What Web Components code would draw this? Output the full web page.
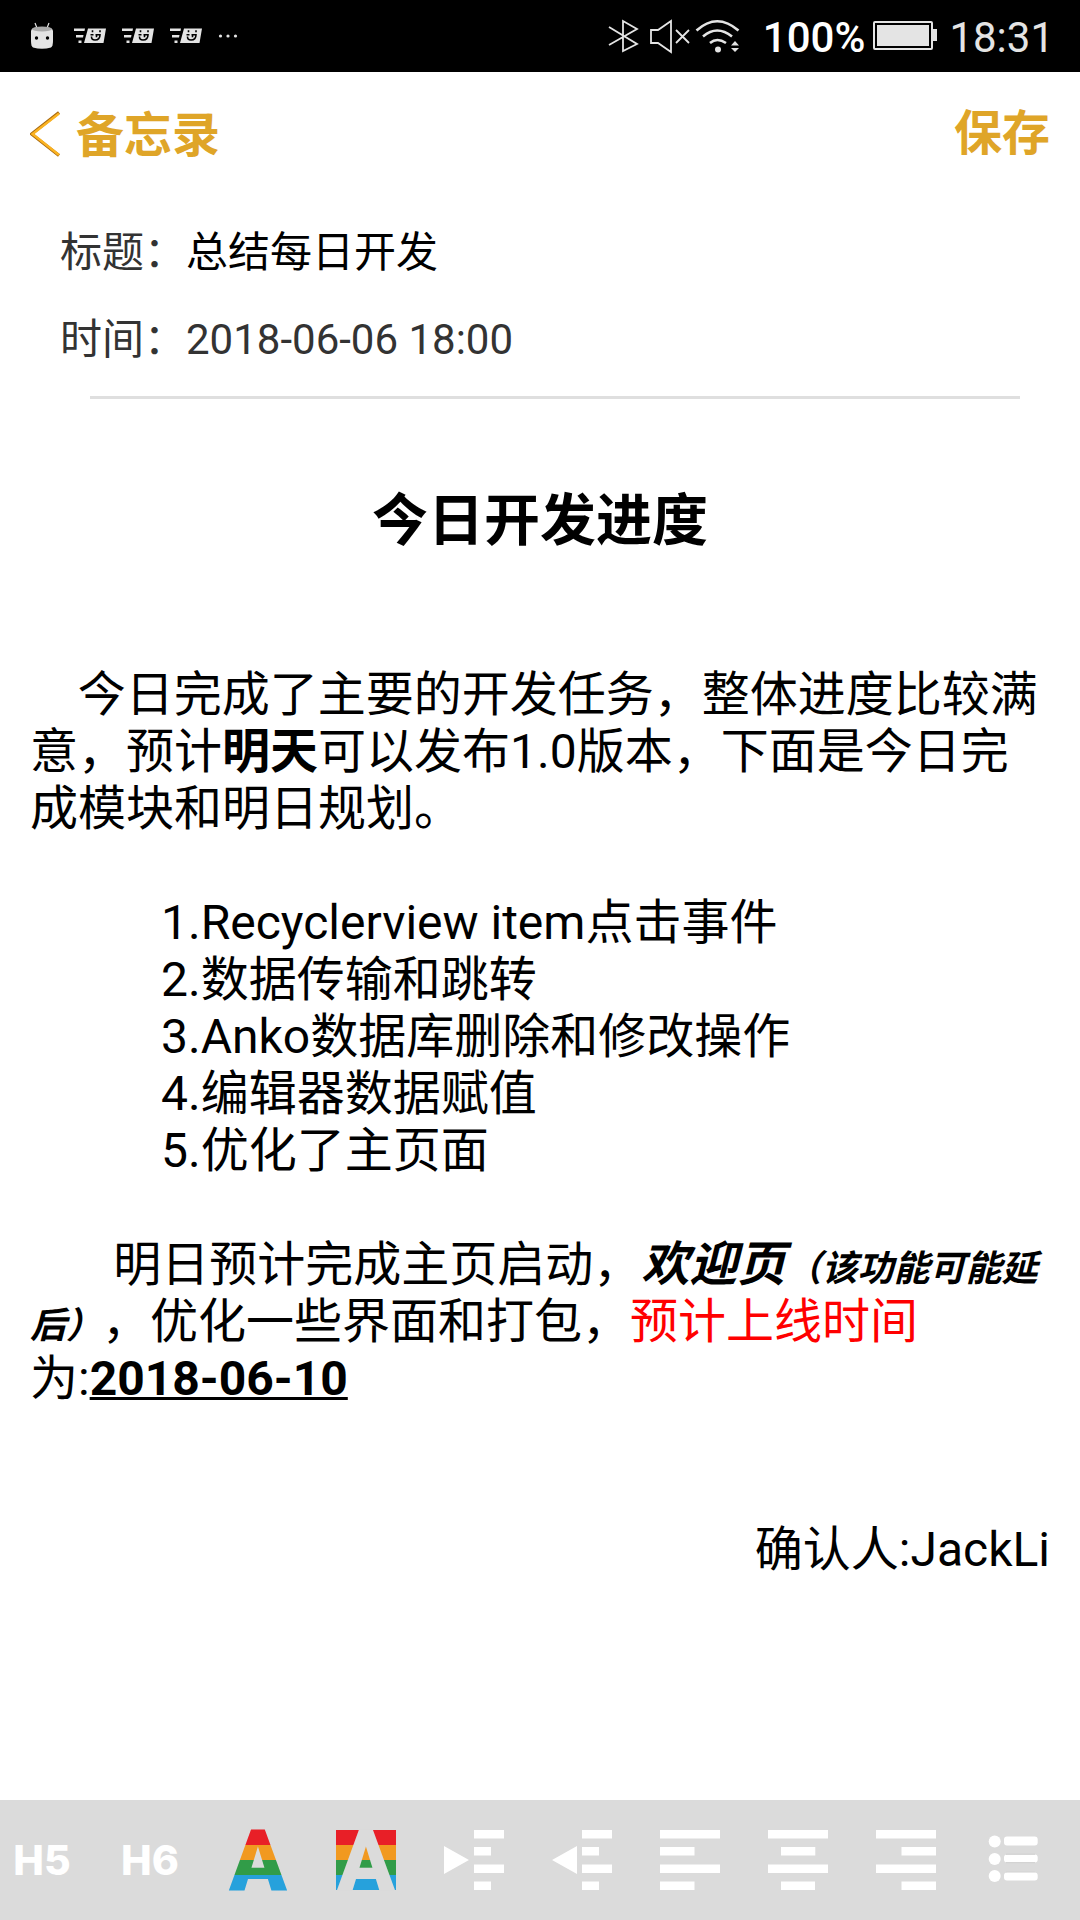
<!DOCTYPE html>
<html lang="zh-CN">
<head>
<meta charset="utf-8">
<meta name="viewport" content="width=device-width, initial-scale=1">
<title>备忘录</title>
<style>
  html, body { margin: 0; height: 100%; }
  body { background: #fff; color: #000; font-family: Roboto, "Noto Sans CJK SC", sans-serif; text-spacing-trim: space-all; }
</style>
</head>
<body>
<memo-app></memo-app>

<template id="status-bar">
  <style>
    :host { display: flex; align-items: center; height: 72px; padding: 0 26px 0 30px; box-sizing: border-box; background: #000; color: #e4e4e4; font-size: 42px; line-height: 68px; }
    svg { display: block; flex: none; }
    .left { display: flex; align-items: center; gap: 16px; flex: 1; }
    .left courier-icon:nth-child(2) { margin-left: 4px; }
    .right { display: flex; align-items: center; }
    .right span { padding-top: 4px; }
    .mute { margin: 0 4px 0 10px; }
    .level { font-weight: 500; color: #fff; margin-left: 22px; margin-right: 8px; }
    .battery { margin-right: 12px; }
  </style>
  <div class="left">
    <svg width="24" height="28" viewBox="0 0 24 28"><path d="M5 1l2 5M19 1l-2 5" stroke="#e4e4e4" stroke-width="1.2"/><path d="M1 9Q1 5 12 5T23 9V19Q23 24 21 25.500Q12 28 3 25.500Q1 24 1 19Z" fill="#e4e4e4"/><ellipse cx="12" cy="7" rx="10" ry="2.600" fill="#aaa"/><circle cx="6.500" cy="16" r="1.700"/><circle cx="17.500" cy="16" r="1.700"/></svg>
    <courier-icon></courier-icon>
    <courier-icon></courier-icon>
    <courier-icon></courier-icon>
    <svg width="20" height="4" viewBox="0 0 20 4" fill="#e4e4e4"><circle cx="2.500" cy="2" r="1.600"/><circle cx="10" cy="2" r="1.600"/><circle cx="17.500" cy="2" r="1.600"/></svg>
  </div>
  <div class="right">
    <svg width="32" height="34" viewBox="0 0 32 34" fill="none" stroke="#e4e4e4" stroke-width="1.800"><path d="M2 8L30 25L16 32V2L30 10L2 26"/></svg>
    <svg class="mute" width="42" height="36" viewBox="0 0 42 36" fill="none" stroke="#e4e4e4" stroke-width="1.800"><path d="M2 12H9L22 3V34L9 25H2ZM27 12L40 25M40 12L27 25"/></svg>
    <svg width="46" height="36" viewBox="0 0 46 36" fill="none" stroke="#e4e4e4" stroke-width="2.600"><path d="M1.500 12.500Q22 -6 43.500 12.500M8 18.500Q22 6.500 37 18.500M15 25Q22 19 31 25"/><circle cx="23" cy="31.500" r="3" fill="#e4e4e4" stroke="none"/><path d="M36 27.500L40 23L44 27.500ZM36 30L40 34L44 30Z" fill="#e4e4e4" stroke="none"/></svg>
    <span class="level">100%</span>
    <svg class="battery" width="64" height="30" viewBox="0 0 64 30"><rect x="1" y="1" width="58" height="27" rx="1" fill="none" stroke="#e4e4e4" stroke-width="2"/><path d="M4 4H56V25H4ZM60 8H64V20H60Z" fill="#e4e4e4"/></svg>
    <span>18:31</span>
  </div>
</template>

<template id="courier-icon">
  <style>:host { display: block; } svg { display: block; }</style>
  <svg width="32" height="16" viewBox="0 0 32 16"><path d="M0 .5H11L10.500 3H0ZM2 7H9.500L9 9.500H2ZM4.500 12.500H7.500V15H4.500ZM14 .5H32L29.500 15H10Z" fill="#e4e4e4"/><path d="M18.500 2.300V4.300M26 2.300V4.300M16.500 6.800H19.500M21.500 6.800H26Q26 12 21 12Q17.300 12 17.500 8.500M22.500 6.800V9.200" fill="none" stroke="#000" stroke-width="1.600"/></svg>
</template>

<template id="memo-header">
  <style>
    :host { display: flex; justify-content: space-between; align-items: center; height: 124px; padding: 0 30px; }
    button { display: flex; align-items: center; gap: 16px; padding: 0; border: 0; background: none; color: #dfa528; font: 700 48px/72px Roboto, "Noto Sans CJK SC", sans-serif; }
    svg { display: block; }
    slot { display: block; }
    slot[name="back"] { padding-top: 4px; }
  </style>
  <button type="button"><svg width="30" height="48" viewBox="0 0 30 48" fill="none"><path d="M29 2.500L1.500 24L29 45.500" stroke="#a86a10" stroke-width="3.200"/><path d="M29 3.500L2.500 24L29 45" stroke="#fbb321" stroke-width="2.400"/></svg><slot name="back"></slot></button>
  <button type="button"><slot name="save"></slot></button>
</template>

<template id="memo-meta">
  <style>
    :host { display: block; padding: 13px 60px 0; color: #333; font-size: 42px; line-height: 87px; }
    .row { display: flex; align-items: center; height: 87px; }
    label, .name { flex: none; }
    input { flex: 1; min-width: 0; padding: 0; border: 0; outline: 0; background: none; color: #000; font: inherit; height: 87px; }
    hr { margin: 13px 0 0 30px; border: 0; height: 3px; background: #dfdfdf; }
  </style>
  <div class="row"><label for="title">标题：</label><input id="title" type="text" value="总结每日开发"></div>
  <div class="row"><span class="name">时间：</span><time datetime="2018-06-06T18:00">2018-06-06 18:00</time></div>
  <hr>
</template>

<template id="memo-body">
  <style>
    :host { display: block; padding: 84px 30px 0; font-size: 48px; line-height: 57px; }
    h1 { margin: 0; font-size: 56px; line-height: 76px; font-weight: 700; text-align: center; }
    p { margin: 0 0 57px; }
    h1 + p { margin-top: 107px; }
    ol { list-style: none; margin: 0 0 57px; padding: 0 0 0 131px; }
    small { font-size: 36px; line-height: 0; }
    .red { color: #f00; }
    .sign { margin-top: 114px; text-align: right; }
    u { text-decoration-thickness: 3px; }
  </style>
  <h1>今日开发进度</h1>
  <p>&nbsp;&nbsp;&nbsp;&nbsp;今日完成了主要的开发任务，整体进度比较满意，预计<b>明天</b>可以发布1.0版本，下面是今日完成模块和明日规划。</p>
  <ol>
    <li>1.Recyclerview item点击事件</li>
    <li>2.数据传输和跳转</li>
    <li>3.Anko数据库删除和修改操作</li>
    <li>4.编辑器数据赋值</li>
    <li>5.优化了主页面</li>
  </ol>
  <p>&nbsp;&nbsp;&nbsp;&nbsp;&nbsp;&nbsp;&nbsp;明日预计完成主页启动，<b><i>欢迎页<small>（该功能可能延后）</small></i></b>，优化一些界面和打包，<span class="red">预计上线时间</span>为:<b><u>2018-06-10</u></b></p>
  <p class="sign">确认人:JackLi</p>
</template>

<template id="format-bar">
  <style>
    :host { display: flex; align-items: center; gap: 48px; height: 120px; padding: 0 12px; box-sizing: border-box; background: #dbdbdb; overflow: hidden; }
    button { flex: none; display: flex; align-items: center; justify-content: center; width: 60px; height: 60px; padding: 0; border: 0; background: none; color: #fff; font: 800 41px/60px Inter, sans-serif; }
    svg { display: block; fill: #fff; overflow: visible; }
    text { font: 900 85px Roboto, sans-serif; text-anchor: middle; }
  </style>
  <button type="button">H5</button>
  <button type="button">H6</button>
  <button type="button" aria-label="文字颜色"><svg width="60" height="60" viewBox="0 0 60 60"><defs><linearGradient id="stripes" gradientUnits="userSpaceOnUse" x1="0" y1="0" x2="0" y2="60"><stop offset=".25" stop-color="#e81f27"/><stop offset=".25" stop-color="#f19920"/><stop offset=".5" stop-color="#f19920"/><stop offset=".5" stop-color="#319c48"/><stop offset=".75" stop-color="#319c48"/><stop offset=".75" stop-color="#26a1dc"/></linearGradient></defs><text x="30" y="60" fill="url(#stripes)">A</text></svg></button>
  <button type="button" aria-label="背景颜色"><svg width="60" height="60" viewBox="0 0 60 60"><rect width="60" height="60" fill="url(#stripes)"/><text x="30" y="60" fill="#dbdbdb">A</text></svg></button>
  <button type="button" aria-label="增加缩进"><svg width="60" height="60" viewBox="0 0 60 60"><path d="M0 16L25 30L0 44ZM30 0H60V8.600H30ZM30 17H47V25.600H30ZM30 34.500H60V43H30ZM30 51.400H47V60H30Z"/></svg></button>
  <button type="button" aria-label="减少缩进"><svg width="60" height="60" viewBox="0 0 60 60"><path d="M25 16L0 30L25 44ZM30 0H60V8.600H30ZM30 17H47V25.600H30ZM30 34.500H60V43H30ZM30 51.400H47V60H30Z"/></svg></button>
  <button type="button" aria-label="左对齐"><svg width="60" height="60" viewBox="0 0 60 60"><path d="M0 0H60V8.600H0ZM0 17H34.500V25.600H0ZM0 34.500H60V43H0ZM0 51.400H34.500V60H0Z"/></svg></button>
  <button type="button" aria-label="居中"><svg width="60" height="60" viewBox="0 0 60 60"><path d="M0 0H60V8.600H0ZM13 17H47.300V25.600H13ZM0 34.500H60V43H0ZM13 51.400H47V60H13Z"/></svg></button>
  <button type="button" aria-label="右对齐"><svg width="60" height="60" viewBox="0 0 60 60"><path d="M0 0H60V8.600H0ZM25.500 17H60V25.600H25.500ZM0 34.500H60V43H0ZM25.500 51.400H60V60H25.500Z"/></svg></button>
  <button type="button" aria-label="项目列表"><svg width="60" height="60" viewBox="0 0 60 60"><circle cx="10.700" cy="11.500" r="6"/><circle cx="10.700" cy="29" r="6"/><circle cx="10.700" cy="46" r="6"/><rect x="20" y="6.500" width="33.700" height="9" rx="3"/><rect x="20" y="24.500" width="33.700" height="8" rx="3"/><path d="M22 24.300H51M22 32.600H51M22 42.300H51" stroke="#c8c8c8" stroke-width=".8"/><rect x="20" y="42.500" width="33.700" height="8" rx="3"/></svg></button>
</template>

<template id="memo-app">
  <style>
    :host { display: flex; flex-direction: column; min-height: 100vh; }
    main { flex: 1; }
  </style>
  <status-bar></status-bar>
  <memo-header><span slot="back">备忘录</span><span slot="save">保存</span></memo-header>
  <main>
    <memo-meta></memo-meta>
    <memo-body></memo-body>
  </main>
  <format-bar></format-bar>
</template>

<script>
  class TemplateElement extends HTMLElement {
    constructor() {
      super();
      const template = document.getElementById(this.localName);
      this.attachShadow({ mode: 'open' }).appendChild(template.content.cloneNode(true));
    }
  }
  customElements.define('courier-icon', class extends TemplateElement {});
  customElements.define('status-bar', class extends TemplateElement {});
  customElements.define('memo-header', class extends TemplateElement {});
  customElements.define('memo-meta', class extends TemplateElement {});
  customElements.define('memo-body', class extends TemplateElement {});
  customElements.define('format-bar', class extends TemplateElement {});
  customElements.define('memo-app', class extends TemplateElement {});
</script>
</body>
</html>
